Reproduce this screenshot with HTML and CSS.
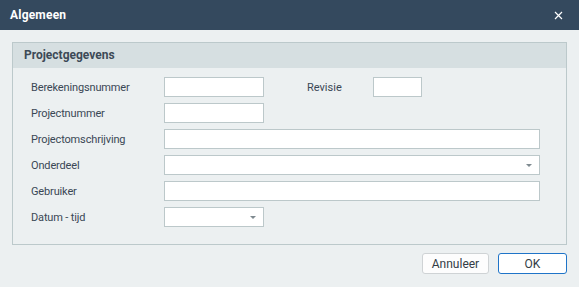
FILE: index.html
```html
<!DOCTYPE html>
<html lang="nl">

<head>
    <meta charset="UTF-8">
    <title>Algemeen</title>
    <link rel="stylesheet" href="styles.css">
</head>

<body>
    <div class="dialog">
        <div class="titlebar">
            <span class="title">Algemeen</span>
            <svg class="close" width="9" height="9" viewBox="0 0 9 9">
                <path d="M1 1 L8 8 M8 1 L1 8" stroke="#ffffff" stroke-width="1.2" fill="none"/>
            </svg>
        </div>

        <div class="content">
            <div class="group">
                <div class="group-header">Projectgegevens</div>
                <div class="group-body">
                    <div class="row">
                        <label class="lbl">Berekeningsnummer</label>
                        <input class="field short" type="text">
                        <label class="lbl-rev">Revisie</label>
                        <input class="field tiny" type="text">
                    </div>
                    <div class="row">
                        <label class="lbl">Projectnummer</label>
                        <input class="field short" type="text">
                    </div>
                    <div class="row">
                        <label class="lbl">Projectomschrijving</label>
                        <input class="field long" type="text">
                    </div>
                    <div class="row">
                        <label class="lbl">Onderdeel</label>
                        <div class="field long combo"><span class="arrow"></span></div>
                    </div>
                    <div class="row">
                        <label class="lbl">Gebruiker</label>
                        <input class="field long" type="text">
                    </div>
                    <div class="row">
                        <label class="lbl">Datum - tijd</label>
                        <div class="field short combo"><span class="arrow"></span></div>
                    </div>
                </div>
            </div>

            <div class="actions">
                <button class="btn">Annuleer</button>
                <button class="btn btn-ok">OK</button>
            </div>
        </div>
    </div>
</body>

</html>
```

FILE: styles.css
```css
* {
    margin: 0;
    padding: 0;
    box-sizing: border-box;
    font-family: Roboto, 'Liberation Sans', sans-serif;
}

body {
    background-color: #ecf0f1;
    width: 579px;
    height: 287px;
    overflow: hidden;
}

.titlebar {
    height: 30px;
    background-color: #34495e;
    display: flex;
    align-items: center;
    justify-content: space-between;
    padding: 0 16px 0 10px;
}

.title {
    color: #ffffff;
    font-weight: bold;
    font-size: 12px;
    letter-spacing: 0.2px;
}

.content {
    padding: 12px 12px 0 12px;
}

.group {
    border: 1px solid #bcc9cb;
    height: 203px;
}

.group-header {
    background-color: #d6dfe1;
    height: 25px;
    padding-left: 11px;
    font-weight: bold;
    font-size: 12px;
    color: #3d4a57;
    line-height: 24px;
}

.group-body {
    padding: 9px 26px 0 18px;
    display: flex;
    flex-direction: column;
    gap: 6px;
}

.row {
    display: flex;
    align-items: center;
    height: 20px;
}

.lbl {
    width: 133px;
    font-size: 11px;
    color: #3a4755;
    letter-spacing: -0.15px;
}

.lbl-rev {
    width: 66px;
    margin-left: 43px;
    font-size: 11px;
    color: #3a4755;
}

.field {
    height: 20px;
    border: 1px solid #bcc8ca;
    background-color: #ffffff;
    outline: none;
}

.short {
    width: 100px;
}

.tiny {
    width: 49px;
}

.long {
    flex: 1;
}

.combo {
    position: relative;
}

.arrow {
    position: absolute;
    right: 7px;
    top: 8px;
    border-left: 3px solid transparent;
    border-right: 3px solid transparent;
    border-top: 3px solid #7f8a90;
}

.actions {
    display: flex;
    justify-content: flex-end;
    gap: 9px;
    margin-top: 8px;
}

.btn {
    height: 21px;
    width: 67px;
    background-color: #fdfdfd;
    border: 1px solid #cfd3d5;
    border-radius: 3px;
    font-size: 12px;
    color: #333c45;
}

.btn-ok {
    width: 69px;
    border-color: #1f74c8;
    background-color: #ffffff;
}
```
